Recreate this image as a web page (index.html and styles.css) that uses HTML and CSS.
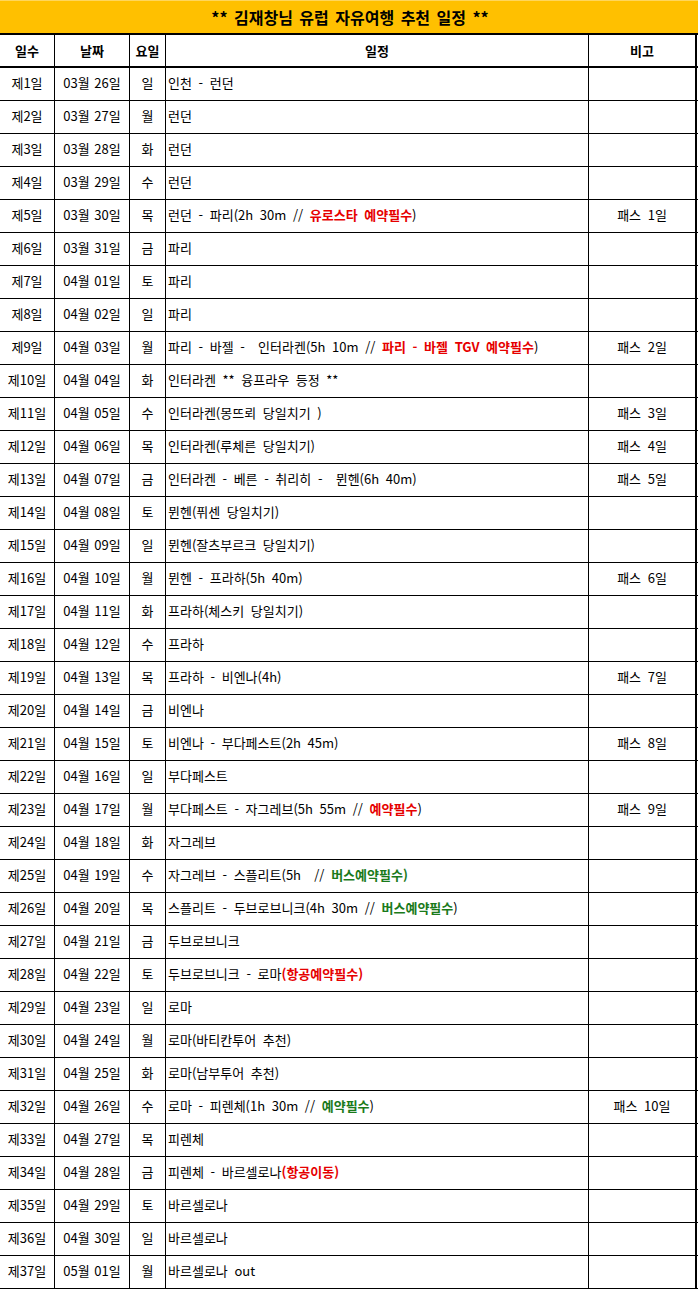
FILE: index.html
```html
<!DOCTYPE html>
<html lang="ko">
<head>
<meta charset="utf-8">
<title>유럽 자유여행 추천 일정</title>
<link rel="stylesheet" href="styles.css">
</head>
<body>
<div class="sheet">
  <div class="title">** 김재창님 유럽 자유여행 추천 일정 **</div>
  <div class="row head">
    <div class="c c1">일수</div><div class="c c2">날짜</div><div class="c c3">요일</div><div class="c c4 mid">일정</div><div class="c c5">비고</div>
  </div>
  <div class="row"><div class="c c1">제1일</div><div class="c c2">03월 26일</div><div class="c c3">일</div><div class="c c4">인천 - 런던</div><div class="c c5"></div></div>
  <div class="row"><div class="c c1">제2일</div><div class="c c2">03월 27일</div><div class="c c3">월</div><div class="c c4">런던</div><div class="c c5"></div></div>
  <div class="row"><div class="c c1">제3일</div><div class="c c2">03월 28일</div><div class="c c3">화</div><div class="c c4">런던</div><div class="c c5"></div></div>
  <div class="row"><div class="c c1">제4일</div><div class="c c2">03월 29일</div><div class="c c3">수</div><div class="c c4">런던</div><div class="c c5"></div></div>
  <div class="row"><div class="c c1">제5일</div><div class="c c2">03월 30일</div><div class="c c3">목</div><div class="c c4">런던 - 파리(2h 30m // <b class="red">유로스타 예약필수</b>)</div><div class="c c5">패스 1일</div></div>
  <div class="row"><div class="c c1">제6일</div><div class="c c2">03월 31일</div><div class="c c3">금</div><div class="c c4">파리</div><div class="c c5"></div></div>
  <div class="row"><div class="c c1">제7일</div><div class="c c2">04월 01일</div><div class="c c3">토</div><div class="c c4">파리</div><div class="c c5"></div></div>
  <div class="row"><div class="c c1">제8일</div><div class="c c2">04월 02일</div><div class="c c3">일</div><div class="c c4">파리</div><div class="c c5"></div></div>
  <div class="row"><div class="c c1">제9일</div><div class="c c2">04월 03일</div><div class="c c3">월</div><div class="c c4">파리 - 바젤 -  인터라켄(5h 10m // <b class="red">파리 - 바젤 TGV 예약필수</b>)</div><div class="c c5">패스 2일</div></div>
  <div class="row"><div class="c c1">제10일</div><div class="c c2">04월 04일</div><div class="c c3">화</div><div class="c c4">인터라켄 ** 융프라우 등정 **</div><div class="c c5"></div></div>
  <div class="row"><div class="c c1">제11일</div><div class="c c2">04월 05일</div><div class="c c3">수</div><div class="c c4">인터라켄(몽뜨뢰 당일치기 )</div><div class="c c5">패스 3일</div></div>
  <div class="row"><div class="c c1">제12일</div><div class="c c2">04월 06일</div><div class="c c3">목</div><div class="c c4">인터라켄(루체른 당일치기)</div><div class="c c5">패스 4일</div></div>
  <div class="row"><div class="c c1">제13일</div><div class="c c2">04월 07일</div><div class="c c3">금</div><div class="c c4">인터라켄 - 베른 - 취리히 -  뮌헨(6h 40m)</div><div class="c c5">패스 5일</div></div>
  <div class="row"><div class="c c1">제14일</div><div class="c c2">04월 08일</div><div class="c c3">토</div><div class="c c4">뮌헨(퓌센 당일치기)</div><div class="c c5"></div></div>
  <div class="row"><div class="c c1">제15일</div><div class="c c2">04월 09일</div><div class="c c3">일</div><div class="c c4">뮌헨(잘츠부르크 당일치기)</div><div class="c c5"></div></div>
  <div class="row"><div class="c c1">제16일</div><div class="c c2">04월 10일</div><div class="c c3">월</div><div class="c c4">뮌헨 - 프라하(5h 40m)</div><div class="c c5">패스 6일</div></div>
  <div class="row"><div class="c c1">제17일</div><div class="c c2">04월 11일</div><div class="c c3">화</div><div class="c c4">프라하(체스키 당일치기)</div><div class="c c5"></div></div>
  <div class="row"><div class="c c1">제18일</div><div class="c c2">04월 12일</div><div class="c c3">수</div><div class="c c4">프라하</div><div class="c c5"></div></div>
  <div class="row"><div class="c c1">제19일</div><div class="c c2">04월 13일</div><div class="c c3">목</div><div class="c c4">프라하 - 비엔나(4h)</div><div class="c c5">패스 7일</div></div>
  <div class="row"><div class="c c1">제20일</div><div class="c c2">04월 14일</div><div class="c c3">금</div><div class="c c4">비엔나</div><div class="c c5"></div></div>
  <div class="row"><div class="c c1">제21일</div><div class="c c2">04월 15일</div><div class="c c3">토</div><div class="c c4">비엔나 - 부다페스트(2h 45m)</div><div class="c c5">패스 8일</div></div>
  <div class="row"><div class="c c1">제22일</div><div class="c c2">04월 16일</div><div class="c c3">일</div><div class="c c4">부다페스트</div><div class="c c5"></div></div>
  <div class="row"><div class="c c1">제23일</div><div class="c c2">04월 17일</div><div class="c c3">월</div><div class="c c4">부다페스트 - 자그레브(5h 55m // <b class="red">예약필수</b>)</div><div class="c c5">패스 9일</div></div>
  <div class="row"><div class="c c1">제24일</div><div class="c c2">04월 18일</div><div class="c c3">화</div><div class="c c4">자그레브</div><div class="c c5"></div></div>
  <div class="row"><div class="c c1">제25일</div><div class="c c2">04월 19일</div><div class="c c3">수</div><div class="c c4">자그레브 - 스플리트(5h  // <b class="green">버스예약필수)</b></div><div class="c c5"></div></div>
  <div class="row"><div class="c c1">제26일</div><div class="c c2">04월 20일</div><div class="c c3">목</div><div class="c c4">스플리트 - 두브로브니크(4h 30m // <b class="green">버스예약필수</b>)</div><div class="c c5"></div></div>
  <div class="row"><div class="c c1">제27일</div><div class="c c2">04월 21일</div><div class="c c3">금</div><div class="c c4">두브로브니크</div><div class="c c5"></div></div>
  <div class="row"><div class="c c1">제28일</div><div class="c c2">04월 22일</div><div class="c c3">토</div><div class="c c4">두브로브니크 - 로마<b class="red">(항공예약필수)</b></div><div class="c c5"></div></div>
  <div class="row"><div class="c c1">제29일</div><div class="c c2">04월 23일</div><div class="c c3">일</div><div class="c c4">로마</div><div class="c c5"></div></div>
  <div class="row"><div class="c c1">제30일</div><div class="c c2">04월 24일</div><div class="c c3">월</div><div class="c c4">로마(바티칸투어 추천)</div><div class="c c5"></div></div>
  <div class="row"><div class="c c1">제31일</div><div class="c c2">04월 25일</div><div class="c c3">화</div><div class="c c4">로마(남부투어 추천)</div><div class="c c5"></div></div>
  <div class="row"><div class="c c1">제32일</div><div class="c c2">04월 26일</div><div class="c c3">수</div><div class="c c4">로마 - 피렌체(1h 30m // <b class="green">예약필수</b>)</div><div class="c c5">패스 10일</div></div>
  <div class="row"><div class="c c1">제33일</div><div class="c c2">04월 27일</div><div class="c c3">목</div><div class="c c4">피렌체</div><div class="c c5"></div></div>
  <div class="row"><div class="c c1">제34일</div><div class="c c2">04월 28일</div><div class="c c3">금</div><div class="c c4">피렌체 - 바르셀로나<b class="red">(항공이동)</b></div><div class="c c5"></div></div>
  <div class="row"><div class="c c1">제35일</div><div class="c c2">04월 29일</div><div class="c c3">토</div><div class="c c4">바르셀로나</div><div class="c c5"></div></div>
  <div class="row"><div class="c c1">제36일</div><div class="c c2">04월 30일</div><div class="c c3">일</div><div class="c c4">바르셀로나</div><div class="c c5"></div></div>
  <div class="row"><div class="c c1">제37일</div><div class="c c2">05월 01일</div><div class="c c3">월</div><div class="c c4">바르셀로나 out</div><div class="c c5"></div></div>
</div>
</body>
</html>
```

FILE: styles.css
```css
html, body {
  margin: 0;
  padding: 0;
  background: #ffffff;
}
body {
  font-family: "Noto Sans CJK KR", "Noto Sans", sans-serif;
  font-size: 13px;
  color: #000000;
}
.sheet {
  width: 698px;
}
.title {
  box-sizing: border-box;
  height: 35px;
  background: #ffc000;
  border-top: 1px solid #ffd65c;
  border-bottom: 2px solid #000000;
  display: flex;
  align-items: center;
  justify-content: center;
  font-size: 16px;
  font-weight: bold;
  padding-left: 2px;
  padding-bottom: 1px;
  word-spacing: 2px;
}
.row {
  box-sizing: border-box;
  display: grid;
  grid-template-columns: 55px 75px 36px 423px 108px;
  height: 33px;
  border-bottom: 1px solid #000000;
}
.row.head {
  border-bottom: 2px solid #000000;
  font-weight: bold;
}
.c {
  box-sizing: border-box;
  border-right: 1px solid #000000;
  display: flex;
  align-items: center;
  justify-content: center;
  white-space: pre;
  overflow: hidden;
  padding-bottom: 3px;
}
.row.head .c {
  padding-bottom: 1px;
}
.c2 {
  word-spacing: 1px;
}
.c4 {
  justify-content: flex-start;
  padding-left: 2px;
  word-spacing: 3px;
}
.c4.mid {
  justify-content: center;
  padding-left: 0;
}
.c5 {
  border-right: 2px solid #000000;
  word-spacing: 3px;
}
.red {
  color: #e60000;
}
.green {
  color: #1a7a1a;
}
```
